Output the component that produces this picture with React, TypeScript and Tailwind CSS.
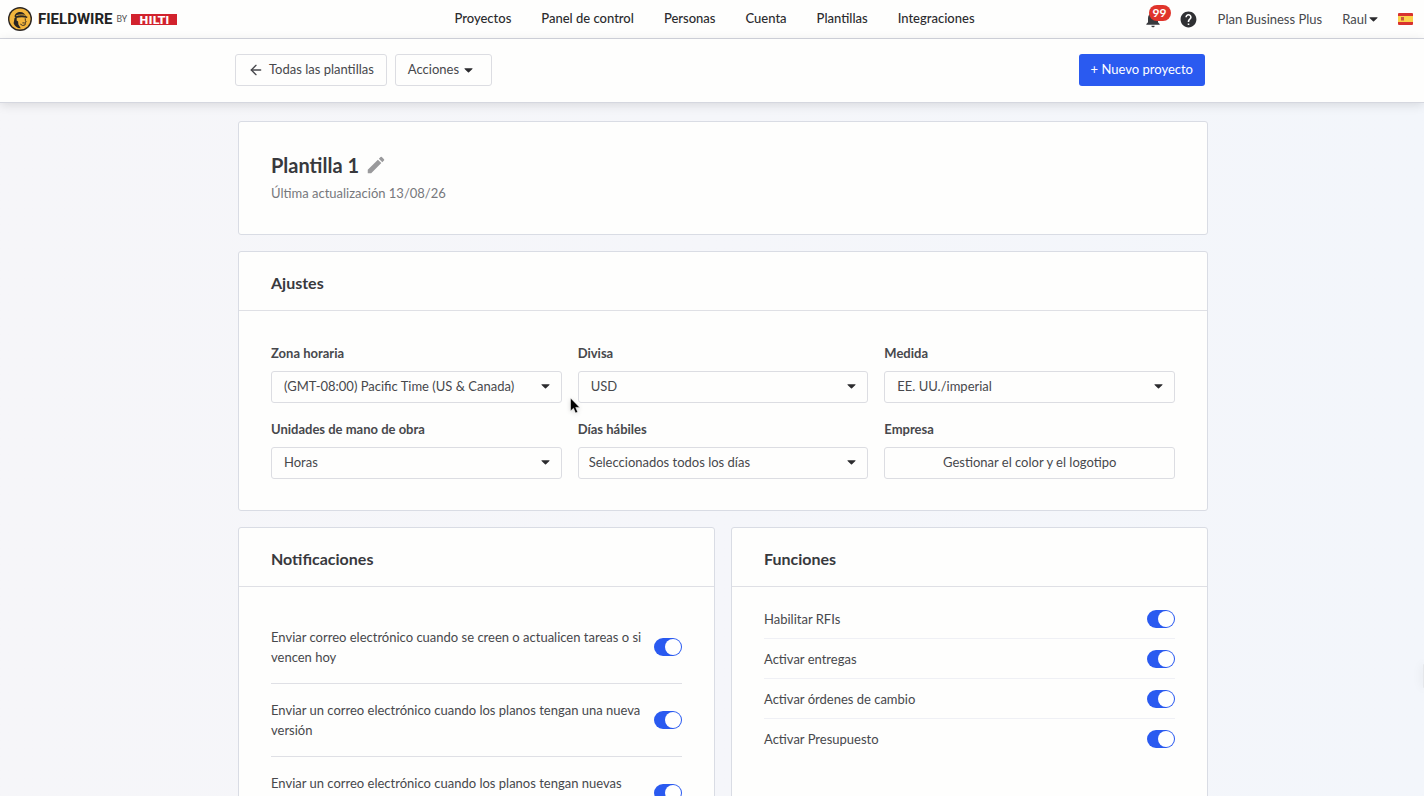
import { useState, type ReactNode } from "react"
import { ArrowLeft } from "lucide-react"
import { MdEdit, MdHelp, MdNotifications } from "react-icons/md"

const navItems = ["Proyectos", "Panel de control", "Personas", "Cuenta", "Plantillas", "Integraciones"]

const notifications = [
  "Enviar correo electrónico cuando se creen o actualicen tareas o si vencen hoy",
  "Enviar un correo electrónico cuando los planos tengan una nueva versión",
  "Enviar un correo electrónico cuando los planos tengan nuevas",
]

const features = ["Habilitar RFIs", "Activar entregas", "Activar órdenes de cambio", "Activar Presupuesto"]

function Caret({ className = "" }: { className?: string }) {
  return (
    <svg className={className} width="9" height="5" viewBox="0 0 9 5" fill="#2b2b2e" aria-hidden="true">
      <path d="M.9.300h7.200c.4 0 .6.400.300.700L5 4.200a.7.700 0 0 1-1 0L.600 1C.3.700.5.300.9.300z" />
    </svg>
  )
}

function Logo() {
  return (
    <a href="#" aria-label="Fieldwire by Hilti" className="flex items-center">
      <svg width="24" height="24" viewBox="0 0 24 24">
        <circle cx="12" cy="12" r="12" fill="#2a2522" />
        <circle cx="12" cy="12" r="10.6" fill="#f3b53c" />
        {/* hard hat */}
        <path d="M6.600 9.600C6.800 6.800 9.200 5 12.200 5c2.900 0 4.900 1.700 5.500 4l1.700.8-.3 1.100c-3.800-.9-7.600-.8-11.400.2z" fill="#2a2522" />
        <path d="M8.200 8.700c3-1 6.200-1.100 9-.4" stroke="#f3b53c" strokeWidth=".9" fill="none" />
        {/* hair, neck and shoulders */}
        <path d="M6.600 10.800l2.200-.2-.2 2.800 1.500 1.200.3 2.800 2.400 3.800c-3.600.1-6.200-2-7.200-5z" fill="#2a2522" />
        {/* face */}
        <path
          d="M17.200 11.300l.2 2.200.8 1.500-.9.4-.2 2.500-2.400.6-2.400-1.400 M14.400 15.900h2.200"
          stroke="#2a2522"
          strokeWidth=".9"
          fill="none"
        />
      </svg>
      <span className="ml-[6px] font-[Roboto] text-[15px] leading-5 font-bold text-[#222]">FIELDWIRE</span>
      <span className="mx-1 font-[Roboto] text-[9px] leading-5 text-[#555]">BY</span>
      <span
        className="flex h-[11px] w-[46px] items-center justify-center bg-[#d2222d] pt-0.5 font-[DejaVu_Sans,sans-serif] text-[11px] leading-none font-bold text-white"
      >
        HILTI
      </span>
    </a>
  )
}

function SpainFlag() {
  return (
    <svg width="15" height="12" viewBox="0 0 15 12" role="img" aria-label="Español">
      <rect width="15" height="12" rx="1" fill="#d8322f" />
      <rect y="3" width="15" height="6" fill="#fbd24a" />
      <rect x="3" y="4" width="3" height="3.500" fill="#c9593a" />
    </svg>
  )
}

function Card({ title, children }: { title?: string; children: ReactNode }) {
  return (
    <section className="rounded-[3px] border border-[#d9dce4] bg-[#fefefd]">
      {title && (
        <h2 className="border-b border-[#dfe0e5] px-8 pt-[19px] pb-[15px] text-base leading-6 font-bold text-[#38393d]">
          {title}
        </h2>
      )}
      {children}
    </section>
  )
}

function SelectField({ id, label, value, inset = "pl-3" }: { id: string; label: string; value: string; inset?: string }) {
  return (
    <div>
      <label htmlFor={id} className="mb-2 block text-[13px] leading-5 font-bold text-[#47484c]">
        {label}
      </label>
      <div className="relative">
        <select
          id={id}
          className={`block h-8 w-full appearance-none rounded-[3px] border border-[#dcdde2] bg-transparent pr-8 text-[13px] text-[#47484c] ${inset}`}
        >
          <option>{value}</option>
        </select>
        <Caret className="pointer-events-none absolute top-[13px] right-3" />
      </div>
    </div>
  )
}

function Toggle({ id }: { id: string }) {
  const [on, setOn] = useState(true)

  return (
    <input
      id={id}
      type="checkbox"
      role="switch"
      checked={on}
      onChange={() => setOn(!on)}
      className="flex h-[18px] w-7 shrink-0 cursor-pointer appearance-none rounded-full bg-gray-300 p-px before:size-4 before:rounded-full before:bg-white checked:justify-end checked:bg-[#2a5af0]"
    />
  )
}

export default function App() {
  return (
    <div className="min-h-screen bg-linear-to-r from-[#f6f6f9] via-[#f5f6fa] to-[#f3f6fb] font-[Lato,sans-serif] text-[#47484c]">
      <header className="grid h-[39px] grid-cols-[1fr_auto_1fr] items-center border-b border-[#d5d7df] bg-[#fefefd] pr-[11px] pl-2">
        <Logo />
        <nav className="flex gap-[30px] pb-0.5 pl-2 text-[13px] leading-5 font-medium text-[#2b2b2e]">
          {navItems.map((item) => (
            <a key={item} href="#">
              {item}
            </a>
          ))}
        </nav>
        <div className="flex items-center justify-end text-[13px] leading-5">
          <button aria-label="Notificaciones" className="relative mr-4">
            <MdNotifications className="size-5 text-[#38393d]" />
            <span className="absolute -top-1 left-[6px] rounded-full bg-[#e0342b] px-1 text-[12px] leading-4 font-bold text-white">
              99
            </span>
          </button>
          <button aria-label="Ayuda" className="mr-5">
            <MdHelp className="size-[19px] text-[#2f3033]" />
          </button>
          <span className="mr-5">Plan Business Plus</span>
          <button className="mr-5 flex items-center gap-0.5">
            Raul
            <Caret />
          </button>
          <SpainFlag />
        </div>
      </header>

      <div className="relative border-b border-[#d5d7df] bg-[#fefefd] pl-4 shadow-[0_2px_10px_rgba(0,0,0,0.12)]">
        <div className="mx-auto flex max-w-[970px] gap-2 pt-[15px] pb-4">
          <button className="flex h-8 items-center gap-[5px] rounded-[3px] border border-[#dcdde2] px-3 text-[13px]">
            <ArrowLeft className="size-4" strokeWidth={2} />
            Todas las plantillas
          </button>
          <button className="flex h-8 items-center gap-[5px] rounded-[3px] border border-[#dcdde2] pr-[18px] pl-3 text-[13px]">
            Acciones
            <Caret />
          </button>
          <button className="ml-auto h-8 rounded-[3px] bg-[#2a5af0] px-3 text-[13px] text-white">
            + Nuevo proyecto
          </button>
        </div>
      </div>

      <main className="pt-[18px] pl-[22px]">
        <div className="mx-auto flex max-w-[970px] flex-col gap-4">
          <Card>
            <div className="px-8 pt-[31px] pb-[31px]">
              <div className="flex items-center gap-[6px]">
                <h1 className="text-xl leading-6 font-bold text-[#38393d]">Plantilla 1</h1>
                <button aria-label="Editar nombre">
                  <MdEdit className="size-[22px] text-[#9a9a9c]" />
                </button>
              </div>
              <p className="mt-[6px] text-[13px] leading-5 text-[#77787c]">Última actualización 13/08/26</p>
            </div>
          </Card>

          <Card title="Ajustes">
            <div className="grid grid-cols-3 gap-4 px-8 pt-8 pb-[31px]">
              <SelectField id="timezone" label="Zona horaria" value="(GMT-08:00) Pacific Time (US & Canada)" />
              <SelectField id="currency" label="Divisa" value="USD" />
              <SelectField id="units" label="Medida" value="EE. UU./imperial" />
              <SelectField id="labor" label="Unidades de mano de obra" value="Horas" />
              <SelectField id="workdays" label="Días hábiles" value="Seleccionados todos los días" inset="pl-[10px]" />
              <div>
                <label htmlFor="branding" className="mb-2 block text-[13px] leading-5 font-bold">
                  Empresa
                </label>
                <button id="branding" className="block h-8 w-full rounded-[3px] border border-[#dcdde2] text-[13px]">
                  Gestionar el color y el logotipo
                </button>
              </div>
            </div>
          </Card>

          <div className="grid grid-cols-2 gap-4">
            <Card title="Notificaciones">
              <ul className="px-8 pt-6">
                {notifications.map((text, i) => (
                  <li key={text} className="flex items-center gap-2 border-b border-[#dfe0e5] py-4 last:border-b-0">
                    <label htmlFor={`notification-${i}`} className="min-h-10 flex-1 text-[13px] leading-5">
                      {text}
                    </label>
                    <Toggle id={`notification-${i}`} />
                  </li>
                ))}
              </ul>
            </Card>
            <Card title="Funciones">
              <ul className="px-8 pt-3">
                {features.map((text, i) => (
                  <li key={text} className="flex h-10 items-center gap-4 border-b border-[#eff0f5] last:border-b-0">
                    <label htmlFor={`feature-${i}`} className="flex-1 text-[13px] leading-5">
                      {text}
                    </label>
                    <Toggle id={`feature-${i}`} />
                  </li>
                ))}
              </ul>
            </Card>
          </div>
        </div>
      </main>

      {/* edge of the collapsed help tab */}
      <div className="fixed top-[664px] right-0 h-6 w-px rounded-l-full bg-gray-200 shadow-[0_0_8px_rgba(0,0,0,0.25)]" />

      <svg
        className="pointer-events-none absolute top-[397px] left-[569px] drop-shadow-sm"
        width="12"
        height="18"
        viewBox="0 0 12 18"
        aria-hidden="true"
      >
        <path d="M1.500 1v13l3-2.800 2 4.800 2.200-.9-2-4.700h4z" fill="#000" stroke="#fff" strokeWidth=".5" />
      </svg>
    </div>
  )
}
